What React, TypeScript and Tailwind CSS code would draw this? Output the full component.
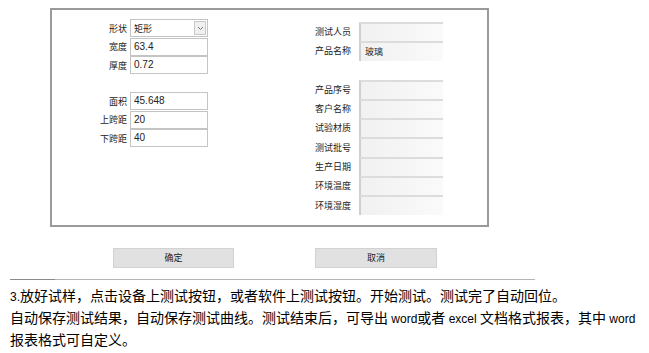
import React from "react";

const cjk = { fontFamily: '"Noto Sans CJK SC", "Noto Sans", sans-serif' };
const lat = { fontFamily: '"Liberation Sans", Arial, sans-serif' };

function LeftRow({ label, value, combo }: { label: string; value: string; combo?: boolean }) {
  return (
    <div className="flex items-center h-[18px]">
      <div className="w-[27px] text-right text-[9px] leading-none text-[#222] whitespace-nowrap" style={cjk}>
        {label}
      </div>
      <div className="ml-[3px] w-[78px] h-[18px] border border-[#c4c4c4] bg-white flex items-center pl-[3px] relative">
        {combo ? (
          <>
            <span className="text-[9px] leading-none text-[#222]" style={cjk}>{value}</span>
            <div className="absolute right-[1px] top-[1px] w-[12px] h-[14px] border border-[#c8c8c8] bg-[#f0f0f0] flex items-center justify-center">
              <svg width="7" height="5" viewBox="0 0 7 5">
                <path d="M1 1 L3.5 3.5 L6 1" fill="none" stroke="#777" strokeWidth="1" />
              </svg>
            </div>
          </>
        ) : (
          <span className="text-[10px] leading-none text-[#222]" style={lat}>{value}</span>
        )}
      </div>
    </div>
  );
}

function RightRow({ label, value }: { label: string; value?: string }) {
  return (
    <div className="flex items-center h-[19.3px]">
      <div className="w-[44px] text-[9px] leading-none text-[#222] whitespace-nowrap" style={cjk}>
        {label}
      </div>
      <div className="w-[84px] h-[19.3px] border-t-2 border-l-2 border-t-[#dcdcdc] border-l-[#cfcfcf] bg-gradient-to-r from-[#f1f1f1] to-[#fafafa] flex items-center pl-[4px]">
        {value && <span className="text-[9px] leading-none text-[#222]" style={cjk}>{value}</span>}
      </div>
    </div>
  );
}

export default function App() {
  return (
    <div className="w-[649px] h-[353px] bg-white overflow-hidden">
      <div className="pt-[8px]">
        <div className="ml-[50px] w-[439px] h-[219px] border-2 border-[#9a9a9a] bg-white flex">
          <div className="pl-[48px] pt-[9px] flex flex-col">
            <div className="flex flex-col gap-[0.5px]">
              <LeftRow label="形状" value="矩形" combo />
              <LeftRow label="宽度" value="63.4" />
              <LeftRow label="厚度" value="0.72" />
            </div>
            <div className="flex flex-col gap-[0.5px] mt-[18px]">
              <LeftRow label="面积" value="45.648" />
              <LeftRow label="上跨距" value="20" />
              <LeftRow label="下跨距" value="40" />
            </div>
          </div>
          <div className="ml-[107px] pt-[12px] flex flex-col">
            <RightRow label="测试人员" />
            <RightRow label="产品名称" value="玻璃" />
            <div className="h-[19px]" />
            <RightRow label="产品序号" />
            <RightRow label="客户名称" />
            <RightRow label="试验材质" />
            <RightRow label="测试批号" />
            <RightRow label="生产日期" />
            <RightRow label="环境温度" />
            <RightRow label="环境湿度" />
          </div>
        </div>
        <div className="flex mt-[21px]">
          <div className="ml-[113px] w-[121px] h-[20px] bg-[#e1e1e1] border border-[#d2d2d2] flex items-center justify-center text-[9px] text-[#222]" style={cjk}>
            确定
          </div>
          <div className="ml-[81px] w-[122px] h-[20px] bg-[#e1e1e1] border border-[#d2d2d2] flex items-center justify-center text-[9px] text-[#222]" style={cjk}>
            取消
          </div>
        </div>
        <div className="mt-[11px] ml-[10px] flex h-px">
          <div className="w-[45px] bg-[#8a8a8a]" />
          <div className="w-[480px] bg-[#b4b4b4]" />
        </div>
        <div className="mt-[5px] pl-[10px] text-[14px] leading-[20px] text-black" style={cjk}>
          <div className="whitespace-nowrap">
            <span className="text-[12px]" style={lat}>3.</span>放好试样，点击设备上测试按钮，或者软件上测试按钮。开始测试。测试完了自动回位。
          </div>
          <div className="whitespace-nowrap">
            自动保存测试结果，自动保存测试曲线。测试结束后，可导出<span className="text-[12px]" style={lat}> word</span>或者<span className="text-[12px]" style={lat}> excel </span>文档格式报表，其中<span className="text-[12px]" style={lat}> word</span>
          </div>
          <div className="whitespace-nowrap">报表格式可自定义。</div>
        </div>
      </div>
    </div>
  );
}
